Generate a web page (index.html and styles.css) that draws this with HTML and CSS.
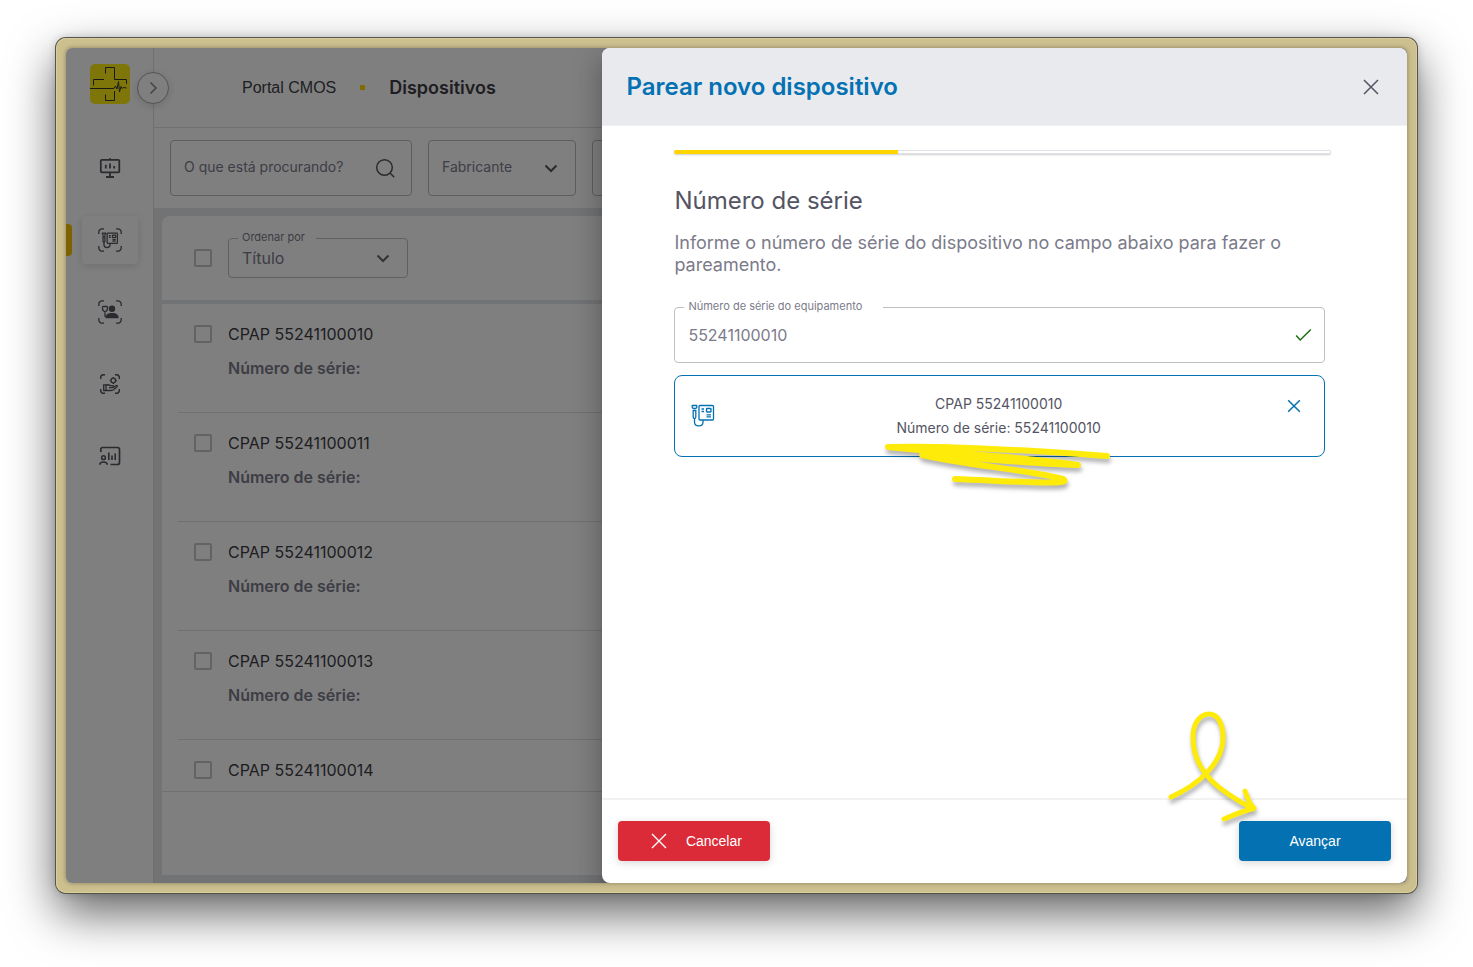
FILE: index.html
```html
<!DOCTYPE html>
<html lang="pt-BR">
<head>
    <meta charset="UTF-8">
    <meta name="viewport" content="width=device-width, initial-scale=1.0">
    <title>Portal CMOS - Dispositivos</title>
    <link rel="stylesheet" href="styles.css">
</head>
<body>
    <svg class="symbols" aria-hidden="true">
        <symbol id="device" viewBox="0 0 24 24">
            <rect x="8" y="1.5" width="14.5" height="14.5" rx="1"/>
            <rect x="15.5" y="4.5" width="4.5" height="3.5" rx=".5"/>
            <path d="M10.5 5h2.5M10.5 7.5h2.5M15.5 10.800H20M15.5 12.800H20"/>
            <path d="M1.300 1.5h4.400c.6 1.500 0 3-2.200 3s-2.800-1.500-2.200-3z"/>
            <path d="M2.200 6.500h2.600v6.500c0 2-2.600 2-2.600 0z"/>
            <path d="M3.500 14.500v3.500c0 5.200 8.500 5.200 8.500 0v-2"/>
        </symbol>
        <symbol id="scan" viewBox="0 0 24 24">
            <path d="M.8 6V4.500A3.500 3.500 0 0 1 4.500.8H6M18 .8h1.500a3.500 3.500 0 0 1 3.700 3.700V6M23.200 18v1.500a3.500 3.500 0 0 1-3.700 3.700H18M6 23.200H4.500a3.500 3.500 0 0 1-3.700-3.700V18"/>
        </symbol>
        <symbol id="close" viewBox="0 0 24 24">
            <path d="M5 5l14 14M19 5L5 19"/>
        </symbol>
        <symbol id="chevron" viewBox="0 0 24 24">
            <path d="M6.500 9.500L12 15l5.500-5.500"/>
        </symbol>
    </svg>

    <div class="frame">
        <div class="app">
            <aside class="sidebar">
                <svg class="logo" viewBox="0 0 40 40">
                    <rect width="40" height="40" rx="5" fill="#ffec14" stroke="none"/>
                    <path d="M15.500 9.500v-6h9V15.500h12V20M3.500 21.500v-6H14M0 24.500h23l1.500-.5 1-2 1.500 3 1.500-7.500 1 10.500 1.500-5.500 1.200 2 1-1 3.300.5M15.500 30.500v6h9V27" fill="none" stroke="#333" stroke-width="1"/>
                </svg>
                <button class="toggle" aria-label="Expandir menu">
                    <svg viewBox="0 0 24 24"><path d="M9.500 6.500L15 12l-5.500 5.500"/></svg>
                </button>
                <nav class="nav">
                    <a href="#" class="nav-item" aria-label="Painel">
                        <svg viewBox="0 0 24 24"><rect x="2.800" y="3.800" width="18.500" height="12.500" rx="1" stroke-width="1.800"/><path d="M12 2.300V4M12 16.500V21M8 21h8" stroke-width="1.800"/><path d="M7.800 8.800v3.700M12 7.500v5M16.200 10v2.500" stroke-width="1.800"/></svg>
                    </a>
                    <a href="#" class="nav-item active" aria-label="Dispositivos">
                        <svg viewBox="0 0 24 24"><use href="#scan"/><use href="#device" x="3.500" y="4" width="17" height="17" stroke-width="1.800"/></svg>
                    </a>
                    <a href="#" class="nav-item" aria-label="Pacientes">
                        <svg viewBox="0 0 24 24"><use href="#scan"/><circle cx="14" cy="8.800" r="3.200" class="solid"/><path d="M7.500 18.200c-.5-3.200 2-5.200 6.500-5.200s7 2 6.500 5.200z" class="solid"/><path d="M4.500 7.500c0-1 .8-1.200 1.300-1h2.400c.8-.2 1.300.2 1.300 1 0 2.500-1 4-2.500 4s-2.500-1.500-2.500-4zM7 11.500v5.500"/></svg>
                    </a>
                    <a href="#" class="nav-item" aria-label="Serviços">
                        <svg viewBox="0 0 24 24"><use href="#scan" x="2" y="2" width="20" height="20" stroke-width="1.800"/><circle cx="15.300" cy="8.500" r="2.300"/><path d="M15.300 5v1M15.300 11v1M11.800 8.500h1M17.800 8.500h1M5.700 12.800h2.300v5.700H5.700zM8 13.500c1.500-1 3-.8 4 .2h2.500c1.500.3 1.200 1.900 0 2H11M15.500 15.200l2.500-1.700c1.200-.5 1.700.5 1 1.300l-3.500 3c-.8.600-1.500.7-2.500.7H8"/></svg>
                    </a>
                    <a href="#" class="nav-item" aria-label="Relatórios">
                        <svg viewBox="0 0 24 24"><path d="M2.800 8V5.500a2 2 0 0 1 2-2h14.700a2 2 0 0 1 2 2v13a2 2 0 0 1-2 2H12.500" stroke-width="1.700"/><circle cx="5.500" cy="13.700" r="1.900" stroke-width="1.500"/><path d="M1.800 20.800c0-3.800 7.400-3.800 7.400 0M10.800 8.500v7.500M14 11.500V16M17.200 9.500V16" stroke-width="1.600"/></svg>
                    </a>
                </nav>
            </aside>

            <main class="main">
                <header class="topbar">
                    <a href="#" class="crumb">Portal CMOS</a>
                    <span class="crumb-dot"></span>
                    <h1 class="crumb-current">Dispositivos</h1>
                </header>

                <div class="filters">
                    <div class="filter filter-search">
                        <input type="text" placeholder="O que está procurando?" aria-label="O que está procurando?">
                        <svg viewBox="0 0 24 24"><circle cx="11.500" cy="11.500" r="7.800"/><path d="M17.200 17.200l4 4"/></svg>
                    </div>
                    <div class="filter">
                        <select aria-label="Fabricante"><option>Fabricante</option></select>
                        <svg class="chevron"><use href="#chevron"/></svg>
                    </div>
                    <div class="filter">
                        <select aria-label="Modelo"><option>Modelo</option></select>
                        <svg class="chevron"><use href="#chevron"/></svg>
                    </div>
                </div>

                <div class="workspace">
                    <section class="panel">
                        <div class="panel-header">
                            <input type="checkbox" class="check" aria-label="Selecionar todos">
                            <div class="field sort">
                                <label for="sort" class="field-label">Ordenar por</label>
                                <select id="sort"><option>Título</option></select>
                                <svg class="chevron"><use href="#chevron"/></svg>
                            </div>
                        </div>
                        <ul class="list">
                            <li class="row">
                                <input type="checkbox" class="check" id="d10">
                                <div class="row-text">
                                    <label for="d10">CPAP 55241100010</label>
                                    <p>Número de série:</p>
                                </div>
                            </li>
                            <li class="row">
                                <input type="checkbox" class="check" id="d11">
                                <div class="row-text">
                                    <label for="d11">CPAP 55241100011</label>
                                    <p>Número de série:</p>
                                </div>
                            </li>
                            <li class="row">
                                <input type="checkbox" class="check" id="d12">
                                <div class="row-text">
                                    <label for="d12">CPAP 55241100012</label>
                                    <p>Número de série:</p>
                                </div>
                            </li>
                            <li class="row">
                                <input type="checkbox" class="check" id="d13">
                                <div class="row-text">
                                    <label for="d13">CPAP 55241100013</label>
                                    <p>Número de série:</p>
                                </div>
                            </li>
                            <li class="row">
                                <input type="checkbox" class="check" id="d14">
                                <div class="row-text">
                                    <label for="d14">CPAP 55241100014</label>
                                </div>
                            </li>
                        </ul>
                        <div class="panel-footer"></div>
                    </section>
                </div>
            </main>

            <div class="backdrop"></div>

            <section class="drawer" role="dialog" aria-labelledby="drawerTitle">
                <header class="drawer-header">
                    <h2 id="drawerTitle">Parear novo dispositivo</h2>
                    <button class="icon-btn" aria-label="Fechar"><svg><use href="#close"/></svg></button>
                </header>

                <div class="drawer-body">
                    <div class="progress"><div class="progress-fill" style="width: 34%"></div></div>
                    <div class="step">
                        <h3>Número de série</h3>
                        <p class="hint">Informe o número de série do dispositivo no campo abaixo para fazer o pareamento.</p>
                        <div class="field serial">
                            <label for="serial" class="field-label">Número de série do equipamento</label>
                            <input type="text" id="serial" value="55241100010">
                            <svg class="ok" viewBox="0 0 24 24"><path d="M4.500 12.500l4.500 5L20.500 6"/></svg>
                        </div>
                        <div class="device-card">
                            <svg class="device-icon"><use href="#device"/></svg>
                            <div class="device-text">
                                <p>CPAP 55241100010</p>
                                <p>Número de série: 55241100010</p>
                            </div>
                            <button class="icon-btn remove" aria-label="Remover"><svg><use href="#close"/></svg></button>
                            <svg class="mark scribble" viewBox="882 438 232 54">
                                <path d="M1107 456C1040 451 950 445 888 447C930 452 1030 457 1078 465C1020 463 970 457 922 455C965 465 1030 470 1063 479C1076 486 1010 481 955 479"/>
                            </svg>
                        </div>
                    </div>
                </div>

                <footer class="drawer-footer">
                    <button class="btn btn-cancel"><svg><use href="#close"/></svg>Cancelar</button>
                    <button class="btn btn-next">Avançar</button>
                    <svg class="mark arrow" viewBox="1164 706 100 124">
                        <path d="M1171 797C1200 784 1223 762 1223 738C1223 722 1217 714 1209 714C1201 714 1193 722 1193 737C1193 774 1222 792 1253 809M1245 791C1248 800 1250 805 1254 808C1244 811 1233 815 1224 819"/>
                    </svg>
                </footer>
            </section>
        </div>
    </div>
</body>
</html>
```
FILE: styles.css
```css
* {
    margin: 0;
    padding: 0;
    box-sizing: border-box;
}

body {
    display: flex;
    min-height: 100vh;
    padding: 38px 56px 74px;
    font-family: Inter, 'Liberation Sans', sans-serif;
    background: #fff;
    color: #3d3d45;
    overflow: hidden;
}

button, input, select {
    font-family: inherit;
    color: inherit;
}

svg {
    fill: none;
    stroke: currentColor;
    stroke-width: 1.3;
    flex-shrink: 0;
}

.symbols {
    position: absolute;
    width: 0;
    height: 0;
}

.frame {
    flex: 1;
    display: flex;
    padding: 10px;
    border-radius: 10px;
    background: #cdc08f;
    box-shadow: inset 0 0 0 1px #d9cd9c, 0 0 0 1px #55534a, 0 0 10px rgba(0,0,0,0.2), 0 20px 48px rgba(0,0,0,0.62);
}

.app {
    position: relative;
    flex: 1;
    display: flex;
    border-radius: 6px;
    background: #fff;
    overflow: hidden;
    box-shadow: 0 0 5px rgba(0,0,0,0.35);
}

/* Sidebar */
.sidebar {
    position: relative;
    width: 88px;
    padding-top: 16px;
    border-right: 1px solid #e0e0e4;
    display: flex;
    flex-direction: column;
    align-items: center;
    gap: 40px;
}

.logo {
    width: 40px;
    height: 40px;
}

.toggle {
    position: absolute;
    top: 24px;
    right: -16px;
    width: 32px;
    height: 32px;
    border: 1px solid #a8a8ac;
    border-radius: 50%;
    background: #fff;
    box-shadow: 0 2px 8px rgba(0,0,0,0.15);
    color: #888;
    display: flex;
    align-items: center;
    justify-content: center;
    cursor: pointer;
}

.toggle svg {
    width: 24px;
    height: 24px;
    stroke-width: 1.6;
}

.nav {
    align-self: stretch;
    display: flex;
    flex-direction: column;
    align-items: center;
    gap: 24px;
}

.nav-item {
    width: 56px;
    height: 48px;
    border-radius: 4px;
    color: #55555e;
    display: flex;
    align-items: center;
    justify-content: center;
}

.nav-item svg {
    width: 24px;
    height: 24px;
}

.nav-item.active {
    box-shadow: 0 2px 8px rgba(0,0,0,0.14);
}

.nav-item.active::before {
    content: "";
    position: absolute;
    left: 0;
    width: 6px;
    height: 32px;
    border-radius: 0 4px 4px 0;
    background: #ffc400;
}

.solid {
    fill: currentColor;
    stroke: none;
}

/* Main area */
.main {
    flex: 1;
    min-width: 0;
    display: flex;
    flex-direction: column;
}

.topbar {
    height: 80px;
    padding: 0 88px;
    border-bottom: 1px solid #e0e0e4;
    display: flex;
    align-items: center;
    gap: 24px;
}

.crumb {
    font-family: 'Liberation Sans', Arial, sans-serif;
    font-size: 16px;
    color: inherit;
    text-decoration: none;
}

.crumb-dot {
    width: 5px;
    height: 5px;
    background: #ffd900;
}

.crumb-current {
    font-size: 18px;
    font-weight: 600;
}

.filters {
    display: flex;
    gap: 16px;
    padding: 12px 16px;
}

.filter {
    position: relative;
    width: 148px;
    height: 56px;
    border: 1px solid #bbbbc0;
    border-radius: 4px;
    color: #7b7b8a;
}

.filter-search {
    width: 242px;
}

.filter input,
.filter select {
    display: block;
    width: 100%;
    height: 50px;
    padding: 0 40px 0 13px;
    border: none;
    background: none;
    appearance: none;
    font-size: 14px;
    outline: none;
}

.filter input::placeholder {
    color: #7b7b8a;
}

.filter svg {
    position: absolute;
    top: 15px;
    right: 14px;
    width: 24px;
    height: 24px;
    color: #55555e;
    stroke-width: 1.5;
    pointer-events: none;
}

.filter .chevron {
    right: 12px;
    stroke-width: 2;
}

.workspace {
    flex: 1;
    display: flex;
    padding: 8px;
    background: #e4e7ea;
}

.panel {
    flex: 1;
    display: flex;
    flex-direction: column;
    border-radius: 8px 8px 0 0;
    background: #fff;
}

.panel-header {
    height: 88px;
    padding: 0 32px;
    border-bottom: 4px solid #e4e7ea;
    display: flex;
    align-items: center;
    gap: 16px;
}

.check {
    width: 18px;
    height: 18px;
    border: 2px solid #c6c6ca;
    border-radius: 2px;
    appearance: none;
    flex-shrink: 0;
}

/* Outlined field with the label sitting on the border */
.field {
    position: relative;
    border: 1px solid #c0c0c0;
    border-radius: 4px;
    color: #7b7b8a;
}

.field-label {
    position: absolute;
    top: -10px;
    left: 9px;
    padding: 0 11px 0 4px;
    background: #fff;
    font-size: 11px;
    line-height: 16px;
}

.field input,
.field select {
    display: block;
    width: 100%;
    height: 100%;
    padding: 0 40px 0 13px;
    border: none;
    background: none;
    appearance: none;
    font-size: 16px;
    outline: none;
}

.sort {
    width: 180px;
    height: 40px;
}

.chevron {
    position: absolute;
    top: 7px;
    right: 12px;
    width: 24px;
    height: 24px;
    color: #66666e;
    stroke-width: 2;
    pointer-events: none;
}

.list {
    flex: 1 1 0;
    min-height: 0;
    padding: 0 16px;
    overflow: hidden;
    list-style: none;
}

.row {
    height: 109px;
    padding: 18px 16px;
    border-bottom: 1px solid #e0e0e4;
    display: flex;
    gap: 16px;
}

.row .check {
    margin-top: 3px;
}

.row-text {
    display: flex;
    flex-direction: column;
    gap: 10px;
    font-size: 16px;
    line-height: 24px;
}

.row-text p {
    font-weight: 600;
    color: #7b7b8a;
}

.panel-footer {
    height: 84px;
    border-top: 1px solid #e0e0e4;
}

.backdrop {
    position: absolute;
    inset: 0;
    background: rgba(0,0,0,0.5);
}

/* Drawer */
.drawer {
    position: absolute;
    top: 0;
    right: 0;
    bottom: 0;
    width: 60%;
    border-radius: 8px;
    background: #fff;
    box-shadow: 0 8px 10px -5px rgba(0,0,0,0.2), 0 16px 24px 2px rgba(0,0,0,0.14), 0 6px 30px 5px rgba(0,0,0,0.12);
    display: flex;
    flex-direction: column;
}

.drawer-header {
    height: 78px;
    padding: 0 24px;
    border-bottom: 1px solid #f1f1f3;
    border-radius: 8px 8px 0 0;
    background: #e8eaee;
    display: flex;
    align-items: center;
    justify-content: space-between;
}

.drawer-header h2 {
    font-size: 24px;
    line-height: 30px;
    font-weight: 600;
    color: #0471b3;
}

.icon-btn {
    width: 24px;
    height: 24px;
    border: none;
    background: none;
    color: #545463;
    cursor: pointer;
}

.icon-btn svg {
    display: block;
    width: 24px;
    height: 24px;
    stroke-width: 1.5;
}

.drawer-body {
    flex: 1;
    padding: 24px 76px 24px 72px;
}

.progress {
    height: 4px;
    border-radius: 2px;
    background: #fff;
    box-shadow: inset 0 0 0 1px #e1e2e8, 0 1px 2px rgba(0,0,0,0.2);
}

.progress-fill {
    height: 4px;
    border-radius: 2px 0 0 2px;
    background: #ffd500;
}

.step {
    padding: 32px 6px 0 0;
}

.step h3 {
    margin-bottom: 16px;
    font-size: 24px;
    line-height: 30px;
    font-weight: 400;
    color: #545463;
}

.hint {
    margin-bottom: 31px;
    font-size: 18px;
    line-height: 22px;
    color: #7b7b8a;
}

.serial {
    height: 56px;
    margin-bottom: 12px;
}

.serial .field-label {
    padding-right: 21px;
}

.ok {
    position: absolute;
    top: 16px;
    right: 10px;
    width: 22px;
    height: 22px;
    color: #1d6b12;
    stroke-width: 1.6;
}

.device-card {
    position: relative;
    padding: 16px 18px 16px 16px;
    border: 1px solid #0471b3;
    border-radius: 8px;
    display: flex;
    align-items: center;
}

.device-icon {
    width: 24px;
    height: 24px;
    color: #0471b3;
}

.device-text {
    flex: 1;
    font-size: 14px;
    line-height: 24px;
    text-align: center;
    color: #545463;
}

.remove {
    align-self: flex-start;
    height: 28px;
    color: #0471b3;
}

.remove svg {
    width: 20px;
    height: 20px;
    margin: 0 auto;
    stroke-width: 1.8;
}

.drawer-footer {
    position: relative;
    padding: 21px 16px 22px;
    border-top: 2px solid #f2f2f3;
    display: flex;
    justify-content: space-between;
}

.btn {
    width: 152px;
    height: 40px;
    border: none;
    border-radius: 4px;
    font-family: 'Liberation Sans', Arial, sans-serif;
    font-size: 14px;
    color: #fff;
    box-shadow: 0 2px 8px rgba(0,0,0,0.16);
    display: flex;
    align-items: center;
    justify-content: center;
    gap: 15px;
    cursor: pointer;
}

.btn svg {
    width: 24px;
    height: 24px;
    stroke-width: 1.4;
}

.btn-cancel {
    background: #db2b39;
}

.btn-next {
    background: #0471b3;
}

/* Hand-drawn marks over the drawer */
.mark {
    position: absolute;
    color: #ffeb0a;
    stroke-linecap: round;
    stroke-linejoin: round;
    filter: drop-shadow(1px 4px 2px rgba(0,0,0,0.3));
    pointer-events: none;
}

.scribble {
    top: 62px;
    left: calc(50% - 118px);
    width: 232px;
    height: 54px;
    stroke-width: 6;
}

.arrow {
    right: 143px;
    bottom: 53px;
    width: 100px;
    height: 124px;
    stroke-width: 5;
}
```
